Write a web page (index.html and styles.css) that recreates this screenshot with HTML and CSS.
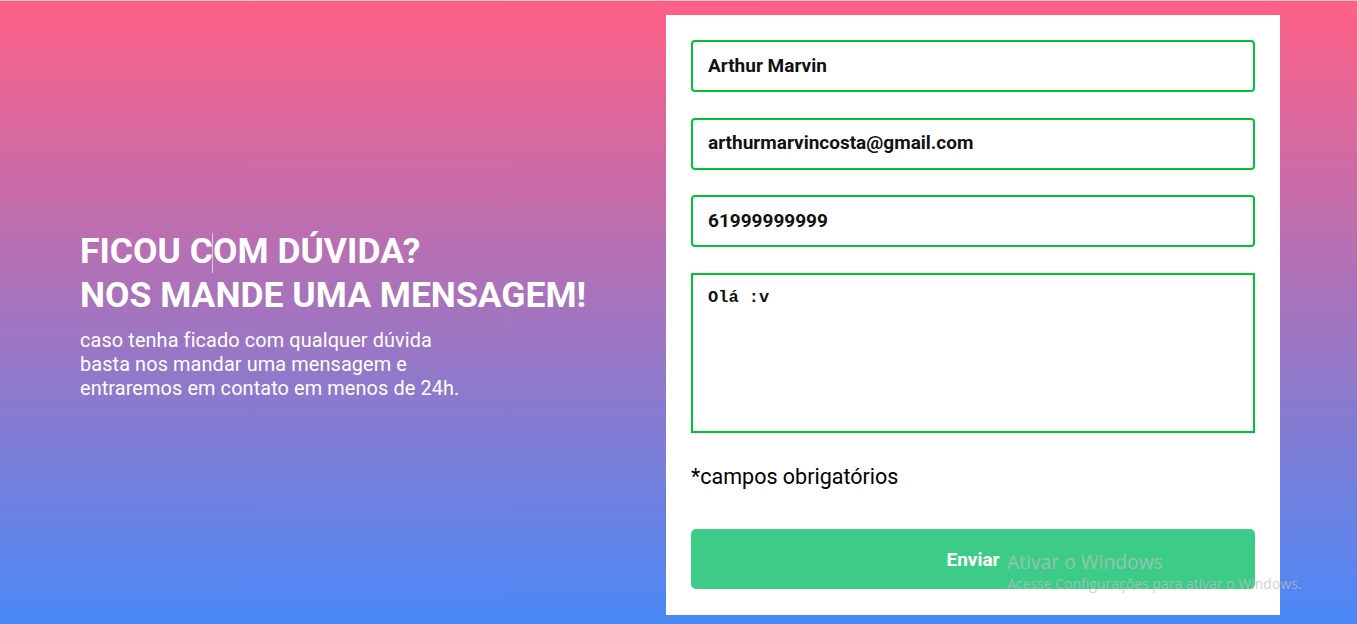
FILE: index.html
```html
<!DOCTYPE html>
<html lang="pt-BR">
<head>
<meta charset="utf-8">
<title>Contato</title>
<link rel="stylesheet" href="styles.css">
</head>
<body>
<main class="page">
  <section class="intro">
    <h1 class="intro-title">FICOU COM DÚVIDA?<br>NOS MANDE UMA MENSAGEM!</h1>
    <p class="intro-text">caso tenha ficado com qualquer dúvida<br>basta nos mandar uma mensagem e<br>entraremos em contato em menos de 24h.</p>
    <span class="ibeam"></span>
  </section>
  <form class="card">
    <input class="field" type="text" value="Arthur Marvin">
    <input class="field" type="email" value="arthurmarvincosta@gmail.com">
    <input class="field" type="tel" value="61999999999">
    <textarea class="field area">Olá :v</textarea>
    <p class="note">*campos obrigatórios</p>
    <button class="send" type="button">Enviar</button>
  </form>
  <div class="watermark">
    <div class="wm-title">Ativar o Windows</div>
    <div class="wm-sub">Acesse Configurações para ativar o Windows.</div>
  </div>
</main>
</body>
</html>
```
FILE: styles.css
```css
* { box-sizing: border-box; }
html, body { margin: 0; padding: 0; height: 100%; }
body { font-family: Roboto, "Liberation Sans", sans-serif; overflow: hidden; }

.page {
  position: relative;
  height: 624px;
  border-top: 1px solid #c9c9c9;
  background: linear-gradient(to bottom, #ff6086 0%, #a474be 50%, #4a89f7 100%);
  display: flex;
  align-items: flex-start;
}

.intro {
  position: relative;
  width: 666px;
  height: 100%;
  padding-left: 80px;
  padding-top: 4px;
  display: flex;
  flex-direction: column;
  justify-content: center;
  color: #fff;
}
.intro-title {
  margin: 0;
  font-size: 35.5px;
  line-height: 44px;
  font-weight: 700;
}
.intro-text {
  margin: 12px 0 0;
  font-size: 19.9px;
  line-height: 24px;
  font-weight: 400;
  letter-spacing: 0.1px;
}
.ibeam {
  position: absolute;
  left: 212px;
  top: 232px;
  width: 1px;
  height: 40px;
  background: rgba(255,255,255,0.6);
}

.card {
  width: 614px;
  height: 600px;
  margin-top: 14px;
  background: #fff;
  padding: 25px 25px 26px;
  display: flex;
  flex-direction: column;
}
.field {
  display: block;
  flex: none;
  width: 100%;
  height: 52px;
  border: 2px solid #00c333;
  border-radius: 4px;
  padding: 0 15px 2px;
  margin: 0 0 25.5px;
  font-family: Roboto, "Liberation Sans", sans-serif;
  font-weight: 700;
  font-size: 19px;
  color: #111;
  background: #fff;
  outline: none;
}
.area {
  height: 160px;
  border-radius: 0;
  resize: none;
  padding: 12px 15px;
  margin-bottom: 0;
  font-family: "Liberation Mono", monospace;
  font-size: 17px;
  font-weight: 700;
  line-height: 22px;
}
.note {
  margin: 31px 0 0;
  font-size: 21.5px;
  line-height: 26px;
  color: #000;
}
.send {
  margin-top: auto;
  flex: none;
  height: 60px;
  width: 100%;
  border: 0;
  border-radius: 5px;
  background: #3dcc88;
  color: #fff;
  font-family: Roboto, "Liberation Sans", sans-serif;
  font-weight: 700;
  font-size: 19px;
}

.watermark {
  position: absolute;
  left: 1007px;
  top: 547px;
  width: 345px;
  font-family: "Open Sans", "Noto Sans", sans-serif;
  color: rgba(190,190,190,0.72);
  pointer-events: none;
  white-space: nowrap;
}
.wm-title { font-size: 19.3px; line-height: 27px; }
.wm-sub { font-size: 14px; line-height: 18px; }
```
